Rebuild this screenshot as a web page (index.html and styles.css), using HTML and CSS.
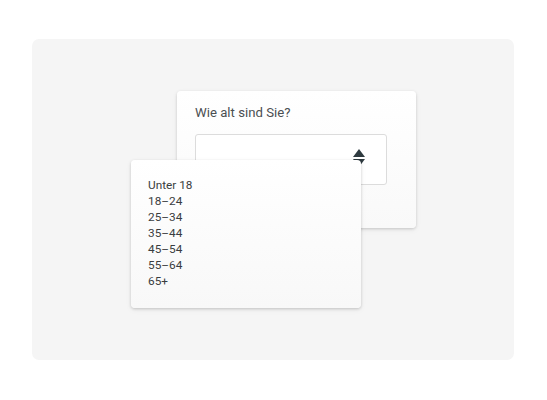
FILE: index.html
```html
<!DOCTYPE html>
<html lang="de">
<head>
<meta charset="utf-8">
<title>Altersfrage</title>
<link rel="stylesheet" href="styles.css">
</head>
<body>
<div class="panel">
  <div class="stage">
    <div class="question-card">
      <div class="question-title">Wie alt sind Sie?</div>
      <div class="select-box">
        <svg class="select-arrows" width="12" height="18" viewBox="0 0 12 18" aria-hidden="true">
          <polygon points="6,0 12,8 0,8" fill="#2f3b40"/>
          <polygon points="0,10 12,10 6,18" fill="#2f3b40"/>
        </svg>
      </div>
    </div>
    <ul class="dropdown">
      <li>Unter 18</li>
      <li>18–24</li>
      <li>25–34</li>
      <li>35–44</li>
      <li>45–54</li>
      <li>55–64</li>
      <li>65+</li>
    </ul>
  </div>
</div>
</body>
</html>
```
FILE: styles.css
```css
html, body {
  margin: 0;
  padding: 0;
  background: #ffffff;
}
body {
  width: 547px;
  height: 400px;
  font-family: Roboto, "Liberation Sans", sans-serif;
  overflow: hidden;
}
.panel {
  margin: 39px 0 0 32px;
  width: 482px;
  height: 321px;
  background: #f5f5f5;
  border-radius: 7px;
}
.stage {
  position: relative;
  padding: 52px 0 0 145px;
}
.question-card {
  width: 239px;
  height: 137px;
  box-sizing: border-box;
  padding: 13px 29px 0 18px;
  background: linear-gradient(#ffffff, #f9f9f9);
  border-radius: 4px;
  box-shadow: 0 1px 3px rgba(0, 0, 0, 0.16), 0 2px 6px rgba(0, 0, 0, 0.05);
}
.question-title {
  font-size: 13.2px;
  line-height: 18px;
  color: #4b4f52;
}
.select-box {
  margin-top: 12px;
  height: 51px;
  box-sizing: border-box;
  border: 1px solid #dcdcdc;
  border-radius: 3px;
  background: #ffffff;
  display: flex;
  align-items: center;
  justify-content: flex-end;
  padding: 0 21px 3px 0;
}
.select-arrows {
  display: block;
}
.dropdown {
  position: absolute;
  left: 99px;
  top: 121px;
  width: 230px;
  height: 148px;
  box-sizing: border-box;
  margin: 0;
  padding: 17px 0 0 17px;
  list-style: none;
  background: linear-gradient(#ffffff, #f8f8f8);
  border-radius: 4px;
  box-shadow: 0 1px 3px rgba(0, 0, 0, 0.18), 0 2px 6px rgba(0, 0, 0, 0.05);
}
.dropdown li {
  font-size: 11.8px;
  line-height: 16px;
  color: #3a3d40;
}
```
